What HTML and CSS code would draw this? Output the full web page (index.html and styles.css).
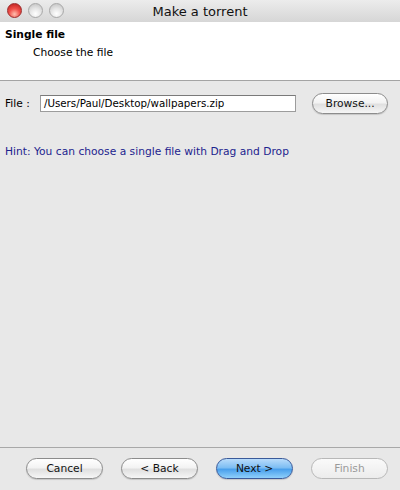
FILE: index.html
```html
<!DOCTYPE html>
<html>
<head>
<meta charset="utf-8">
<link rel="stylesheet" href="styles.css">
</head>
<body>
<div class="window">
  <div class="titlebar">
    <div class="lights">
      <span class="light red"></span>
      <span class="light"></span>
      <span class="light"></span>
    </div>
    <div class="title">Make a torrent</div>
  </div>
  <div class="header">
    <div class="h-title">Single file</div>
    <div class="h-sub">Choose the file</div>
  </div>
  <div class="content">
    <div class="file-row">
      <span class="label">File :</span>
      <div class="field">/Users/Paul/Desktop/wallpapers.zip</div>
      <span class="btn browse">Browse...</span>
    </div>
    <div class="hint">Hint: You can choose a single file with Drag and Drop</div>
  </div>
  <div class="footer">
    <span class="btn">Cancel</span>
    <span class="btn">&lt; Back</span>
    <span class="btn primary">Next &gt;</span>
    <span class="btn disabled">Finish</span>
  </div>
</div>
</body>
</html>
```
FILE: styles.css
```css
html, body {
  margin: 0;
  padding: 0;
}
body {
  width: 400px;
  height: 490px;
  overflow: hidden;
  font-family: "DejaVu Sans", sans-serif;
  font-size: 10.7px;
  color: #000;
}
.window {
  display: flex;
  flex-direction: column;
  height: 490px;
  background: #e8e8e8;
}
.titlebar {
  height: 22px;
  position: relative;
  background: linear-gradient(#ececec, #d6d6d6);
  display: flex;
  align-items: center;
  justify-content: center;
}
.lights {
  position: absolute;
  left: 7px;
  top: 3px;
  display: flex;
  gap: 6px;
}
.light {
  width: 15px;
  height: 15px;
  border-radius: 50%;
  box-sizing: border-box;
  border: 1px solid #a8a8a8;
  background: radial-gradient(circle at 50% 75%, #ffffff 0%, #e6e6e6 45%, #bdbdbd 100%);
}
.light.red {
  border-color: #9c2a2a;
  background: radial-gradient(circle at 50% 78%, #ffc0b0 0%, #f0504a 45%, #b81a18 100%);
}
.title {
  font-size: 13px;
  color: #111;
}
.header {
  background: #fff;
  height: 59px;
  border-bottom: 1px solid #a4a4a4;
  padding: 5px 0 0 5px;
  box-sizing: border-box;
}
.h-title {
  font-weight: bold;
  line-height: 14px;
  margin-top: 1px;
}
.h-sub {
  margin: 4px 0 0 28px;
  line-height: 13px;
}
.content {
  flex: 1;
  padding: 11px 12px 0 5px;
}
.file-row {
  display: flex;
  align-items: center;
  height: 22px;
}
.label {
  width: 35px;
}
.field {
  width: 257px;
  height: 17px;
  box-sizing: border-box;
  border: 1px solid #9c9c9c;
  border-top-color: #7a7a7a;
  background: #fff;
  padding: 0 3px;
  line-height: 15px;
  font-size: 10.3px;
}
.btn {
  display: inline-flex;
  align-items: center;
  justify-content: center;
  width: 77px;
  height: 21px;
  box-sizing: border-box;
  border: 1px solid #8c8c8c;
  border-radius: 11px;
  background: linear-gradient(#ffffff 0%, #f3f3f3 45%, #e0e0e0 55%, #f6f6f6 100%);
  box-shadow: 0 1px 1px rgba(0,0,0,0.15);
  color: #111;
}
.browse {
  width: 76px;
  margin-left: 16px;
}
.hint {
  margin-top: 31px;
  color: #1c238e;
  line-height: 13px;
}
.footer {
  height: 43px;
  border-top: 1px solid #a8a8a8;
  box-sizing: border-box;
  display: flex;
  align-items: flex-start;
  padding: 10px 0 0 26px;
  gap: 18px;
}
.btn.primary {
  border-color: #3a5a9a;
  background: linear-gradient(#b9dcfb 0%, #7ebef3 45%, #4aa0ec 55%, #8fd0fb 100%);
}
.btn.disabled {
  color: #9a9a9a;
  border-color: #b8b8b8;
  background: linear-gradient(#fafafa, #ececec);
  box-shadow: none;
}
```
